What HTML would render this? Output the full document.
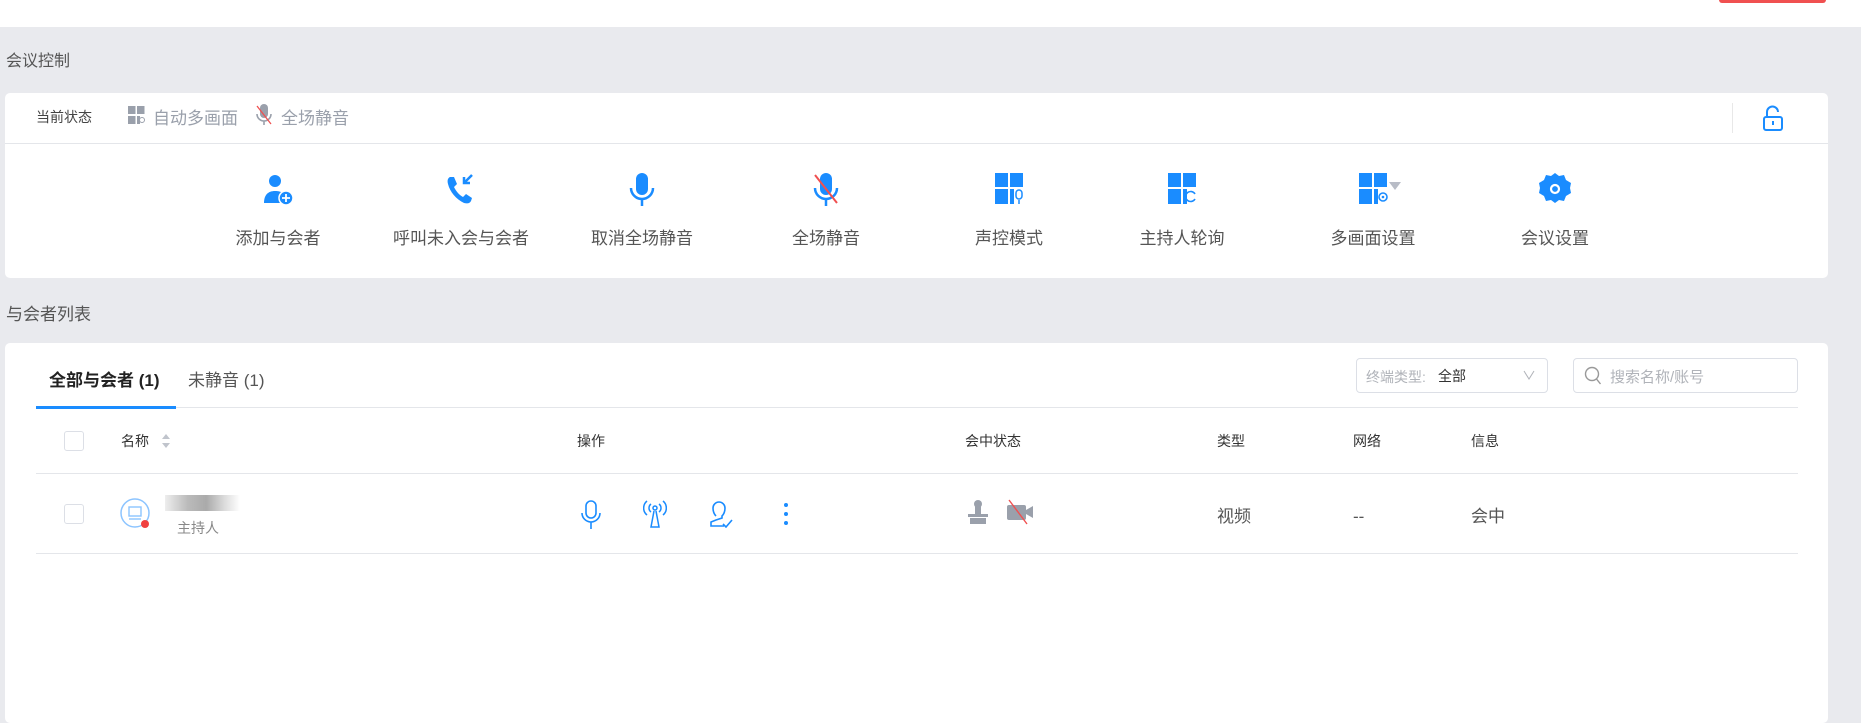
<!DOCTYPE html>
<html><head><meta charset="utf-8">
<style>
*{margin:0;padding:0;box-sizing:border-box}
body{width:1861px;height:702px;background:#e9eaee;font-family:"Liberation Sans","Noto Sans CJK SC",sans-serif;position:relative;overflow:hidden;color:#333}
.a{position:absolute;white-space:nowrap}
.top{left:0;top:0;width:1861px;height:27px;background:#fff}
.card{background:#fff;border-radius:5px}
.lbl{font-size:17px;color:#555}
.act{position:absolute;top:172px;width:180px;text-align:center}
.act svg{display:block;margin:0 auto;width:34px;height:34px}
.act div{margin-top:18px;font-size:17px;color:#555}
.th{font-size:14px;color:#333;top:431px}
.td{font-size:17px;color:#555;top:502px}
</style></head><body>
<div class="a top"></div>
<div class="a" style="left:1719px;top:0;width:107px;height:3px;background:#f05050;border-radius:0 0 3px 3px"></div>
<div class="a lbl" style="left:6px;top:47px;font-size:16px">会议控制</div>

<div class="a card" style="left:5px;top:93px;width:1823px;height:185px"></div>
<div class="a" style="left:5px;top:143px;width:1823px;height:1px;background:#e4e6ea"></div>
<div class="a" style="left:36px;top:107px;font-size:14px;color:#444">当前状态</div>
<svg class="a" style="left:128px;top:106px" width="17" height="18" viewBox="0 0 17 18"><rect x="0" y="0" width="7.5" height="8" fill="#9aa0ab"/><rect x="9" y="0" width="7.5" height="8" fill="#9aa0ab"/><rect x="0" y="10" width="7.5" height="8" fill="#9aa0ab"/><rect x="9" y="10" width="3" height="8" fill="#9aa0ab"/><circle cx="14" cy="14" r="2.5" fill="none" stroke="#9aa0ab"/></svg>
<div class="a" style="left:153px;top:104px;font-size:17px;color:#9aa0ab">自动多画面</div>
<svg class="a" style="left:256px;top:104px" width="16" height="22" viewBox="0 0 16 22"><rect x="4" y="0" width="8" height="14" rx="4" fill="#9aa0ab"/><path d="M1 10a7 7 0 0 0 14 0M8 17v4" stroke="#9aa0ab" stroke-width="1.6" fill="none"/><path d="M1 2l14 18" stroke="#f05050" stroke-width="1.3"/></svg>
<div class="a" style="left:281px;top:104px;font-size:17px;color:#9aa0ab">全场静音</div>
<div class="a" style="left:1732px;top:103px;width:1px;height:30px;background:#e8e8e8"></div>
<svg class="a" style="left:1762px;top:104px" width="22" height="28" viewBox="0 0 22 28"><path d="M5 13V8a5.5 5.5 0 0 1 11 0" fill="none" stroke="#1a8cff" stroke-width="2"/><rect x="2" y="13" width="18" height="13" rx="2" fill="none" stroke="#1a8cff" stroke-width="2"/><path d="M11 17v4" stroke="#1a8cff" stroke-width="2"/></svg>

<div class="act" style="left:188px"><svg viewBox="0 0 34 34"><circle cx="14" cy="9" r="6" fill="#1a8cff"/><path d="M3 31c0-8 4-12 11-12s9 3 9 5v7z" fill="#1a8cff"/><circle cx="25" cy="26" r="7" fill="#1a8cff" stroke="#fff" stroke-width="1.5"/><path d="M25 22v8M21 26h8" stroke="#fff" stroke-width="1.8"/></svg><div>添加与会者</div></div>
<div class="act" style="left:371px"><svg viewBox="0 0 34 34"><path d="M6 5c-2 1-3 3-2 7 2 8 8 15 16 19 4 1 6 0 7-2l1-3-6-4-3 3c-4-2-7-6-9-10l3-3-3-7z" fill="#1a8cff"/><path d="M28 3l-8 8M20 5v6h6" stroke="#1a8cff" stroke-width="2.5" fill="none"/></svg><div>呼叫未入会与会者</div></div>
<div class="act" style="left:552px"><svg viewBox="0 0 34 34"><rect x="11" y="1" width="12" height="22" rx="6" fill="#1a8cff"/><path d="M6 16a11 11 0 0 0 22 0M17 27v7" stroke="#1a8cff" stroke-width="2.5" fill="none"/></svg><div>取消全场静音</div></div>
<div class="act" style="left:736px"><svg viewBox="0 0 34 34"><rect x="11" y="1" width="12" height="22" rx="6" fill="#1a8cff"/><path d="M6 16a11 11 0 0 0 22 0M17 27v7" stroke="#1a8cff" stroke-width="2.5" fill="none"/><path d="M6 3l22 28" stroke="#f05050" stroke-width="2"/></svg><div>全场静音</div></div>
<div class="act" style="left:919px"><svg viewBox="0 0 34 34"><rect x="3" y="1" width="13" height="14" fill="#1a8cff"/><rect x="18" y="1" width="13" height="14" fill="#1a8cff"/><rect x="3" y="17" width="13" height="15" fill="#1a8cff"/><rect x="18" y="17" width="4" height="15" fill="#1a8cff"/><rect x="24" y="18" width="6" height="9" rx="3" fill="none" stroke="#1a8cff" stroke-width="1.5"/><path d="M27 28v4" stroke="#1a8cff" stroke-width="1.5"/></svg><div>声控模式</div></div>
<div class="act" style="left:1092px"><svg viewBox="0 0 34 34"><rect x="3" y="1" width="13" height="14" fill="#1a8cff"/><rect x="18" y="1" width="13" height="14" fill="#1a8cff"/><rect x="3" y="17" width="13" height="15" fill="#1a8cff"/><rect x="18" y="17" width="4" height="15" fill="#1a8cff"/><path d="M30 22a5 5 0 1 0 0 5" stroke="#1a8cff" stroke-width="1.6" fill="none"/></svg><div>主持人轮询</div></div>
<div class="act" style="left:1283px"><svg viewBox="0 0 34 34"><rect x="3" y="1" width="13" height="14" fill="#1a8cff"/><rect x="18" y="1" width="13" height="14" fill="#1a8cff"/><rect x="3" y="17" width="13" height="15" fill="#1a8cff"/><rect x="18" y="17" width="4" height="15" fill="#1a8cff"/><circle cx="27" cy="25" r="4" fill="none" stroke="#1a8cff" stroke-width="1.6"/><circle cx="27" cy="25" r="1.3" fill="#1a8cff"/></svg><div>多画面设置</div></div>
<svg class="a" style="left:1389px;top:182px" width="12" height="8" viewBox="0 0 12 8"><path d="M0 0h12L6 8z" fill="#b8bcc6"/></svg>
<div class="act" style="left:1465px"><svg viewBox="0 0 34 34"><path d="M17 1l4 3 5-1 2 5 5 3-1 5 1 5-5 3-2 5-5-1-4 3-4-3-5 1-2-5-5-3 1-5-1-5 5-3 2-5 5 1z" fill="#1a8cff"/><circle cx="17" cy="17" r="4" fill="none" stroke="#fff" stroke-width="2.2"/></svg><div>会议设置</div></div>

<div class="a lbl" style="left:6px;top:300px;font-size:17px">与会者列表</div>
<div class="a card" style="left:5px;top:343px;width:1823px;height:380px"></div>
<div class="a" style="left:49px;top:366px;font-size:17px;font-weight:bold;color:#222">全部与会者 (1)</div>
<div class="a" style="left:188px;top:366px;font-size:17px;color:#555">未静音 (1)</div>
<div class="a" style="left:36px;top:407px;width:1762px;height:1px;background:#e4e6ea"></div>
<div class="a" style="left:36px;top:406px;width:140px;height:3px;background:#1a8cff"></div>
<div class="a" style="left:1356px;top:358px;width:192px;height:35px;border:1px solid #dcdfe6;border-radius:4px"></div>
<div class="a" style="left:1366px;top:367px;font-size:14px;color:#b0b3b9">终端类型:</div>
<div class="a" style="left:1438px;top:366px;font-size:14px;color:#333">全部</div>
<svg class="a" style="left:1523px;top:370px" width="12" height="10" viewBox="0 0 12 10"><path d="M1 1l5 8 5-8" stroke="#b0b3b9" fill="none" stroke-width="1"/></svg>
<div class="a" style="left:1573px;top:358px;width:225px;height:35px;border:1px solid #dcdfe6;border-radius:4px"></div>
<svg class="a" style="left:1584px;top:366px" width="18" height="19" viewBox="0 0 18 19"><circle cx="8" cy="8" r="6.5" stroke="#999" stroke-width="1.4" fill="none"/><path d="M12.5 13l4 5" stroke="#999" stroke-width="1.4"/></svg>
<div class="a" style="left:1610px;top:366px;font-size:15px;color:#b0b3b9">搜索名称/账号</div>

<div class="a" style="left:64px;top:431px;width:20px;height:20px;border:1px solid #dcdfe6;border-radius:3px"></div>
<div class="a th" style="left:121px">名称</div>
<svg class="a" style="left:161px;top:433px" width="10" height="16" viewBox="0 0 10 16"><path d="M1 6l4-5 4 5zM1 10l4 5 4-5z" fill="#c0c4cc"/></svg>
<div class="a th" style="left:577px">操作</div>
<div class="a th" style="left:965px">会中状态</div>
<div class="a th" style="left:1217px">类型</div>
<div class="a th" style="left:1353px">网络</div>
<div class="a th" style="left:1471px">信息</div>
<div class="a" style="left:36px;top:473px;width:1762px;height:1px;background:#e4e6ea"></div>

<div class="a" style="left:64px;top:504px;width:20px;height:20px;border:1px solid #dcdfe6;border-radius:3px"></div>
<svg class="a" style="left:120px;top:498px" width="34" height="34" viewBox="0 0 34 34"><circle cx="15" cy="15" r="14" fill="none" stroke="#8cc4ff" stroke-width="1.5"/><rect x="9" y="9" width="12" height="9" fill="none" stroke="#8cc4ff" stroke-width="1.4"/><path d="M9 21h12" stroke="#8cc4ff" stroke-width="1.4"/><circle cx="25" cy="26" r="4" fill="#f04040"/></svg>
<div class="a" style="left:165px;top:495px;width:75px;height:16px;background:linear-gradient(90deg,#eee,#bbb 30%,#aaa 55%,#ddd 80%,#fff)"></div>
<div class="a" style="left:177px;top:518px;font-size:14px;color:#888">主持人</div>
<svg class="a" style="left:580px;top:500px" width="22" height="30" viewBox="0 0 22 30"><rect x="6" y="1" width="10" height="17" rx="5" fill="none" stroke="#1a8cff" stroke-width="1.6"/><path d="M2 13a9 9 0 0 0 18 0M11 22v7" stroke="#1a8cff" stroke-width="1.6" fill="none"/></svg>
<svg class="a" style="left:643px;top:500px" width="24" height="28" viewBox="0 0 24 28"><circle cx="12" cy="8" r="2" fill="none" stroke="#1a8cff" stroke-width="1.5"/><path d="M8 4a5 5 0 0 0 0 8M16 4a5 5 0 0 1 0 8M4 1a9 9 0 0 0 0 14M20 1a9 9 0 0 1 0 14M11 11l-3 16h8l-3-16" stroke="#1a8cff" stroke-width="1.5" fill="none"/></svg>
<svg class="a" style="left:708px;top:500px" width="26" height="28" viewBox="0 0 26 28"><path d="M8 16c-2-2-3-4-3-8a6 6 0 0 1 12 0c0 4-1 6-3 8v2l-6 2-5 2v4h13M15 24l3 3 6-7" stroke="#1a8cff" stroke-width="1.6" fill="none"/></svg>
<svg class="a" style="left:782px;top:502px" width="8" height="24" viewBox="0 0 8 24"><circle cx="4" cy="3" r="2" fill="#1a8cff"/><circle cx="4" cy="12" r="2" fill="#1a8cff"/><circle cx="4" cy="21" r="2" fill="#1a8cff"/></svg>
<svg class="a" style="left:967px;top:499px" width="22" height="26" viewBox="0 0 22 26"><circle cx="11" cy="5" r="4" fill="#9aa0ab"/><rect x="8" y="7" width="6" height="8" fill="#9aa0ab"/><rect x="1" y="15" width="20" height="3" fill="#9aa0ab"/><rect x="3" y="19" width="16" height="6" fill="#9aa0ab"/></svg>
<svg class="a" style="left:1005px;top:499px" width="30" height="26" viewBox="0 0 30 26"><rect x="2" y="6" width="19" height="15" rx="2" fill="#9aa0ab"/><path d="M21 11l7-4v12l-7-4z" fill="#9aa0ab"/><path d="M4 1l18 24" stroke="#f05050" stroke-width="1.4"/></svg>
<div class="a td" style="left:1217px">视频</div>
<div class="a td" style="left:1353px;top:507px">--</div>
<div class="a td" style="left:1471px">会中</div>
<div class="a" style="left:36px;top:553px;width:1762px;height:1px;background:#e4e6ea"></div>
</body></html>
